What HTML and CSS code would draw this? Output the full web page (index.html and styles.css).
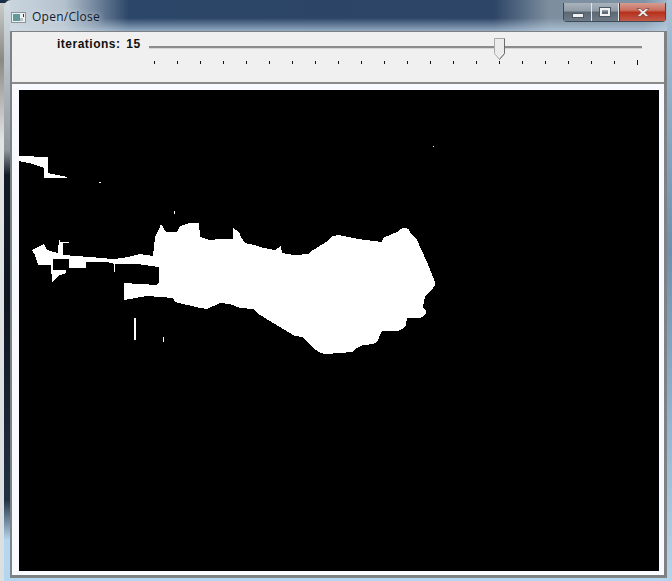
FILE: index.html

```html
<!DOCTYPE html>
<html lang="en">
<head>
    <meta charset="UTF-8">
    <title>Open/Close</title>
    <link rel="stylesheet" href="styles.css">
</head>
<body>
    <div class="window">
        <div class="titlebar">
            <svg class="app-icon" width="15" height="11" viewBox="0 0 15 11">
                <rect x="0.5" y="0.5" width="14" height="10" fill="#eef0f0" stroke="#8d9499"/>
                <rect x="2" y="2" width="7" height="7" fill="#5f9a98"/>
                <rect x="9" y="6" width="3" height="3" fill="#b9c0c2"/>
                <rect x="12" y="2" width="1" height="3" fill="#30363a"/>
            </svg>
            <span class="title">Open/Close</span>
            <div class="controls">
                <div class="btn btn-min"><span class="min-glyph"></span></div>
                <div class="btn btn-max"><span class="max-glyph"></span></div>
                <div class="btn btn-close">
                    <svg width="16" height="11" viewBox="0 0 16 11">
                        <path d="M2 1.5h3.2L8 4l2.8-2.5H14L10 5.500l4 4h-3.200L8 7l-2.800 2.500H2l4-4z" fill="#f2f0f0" stroke="#6b3a38" stroke-width="0.7"/>
                    </svg>
                </div>
            </div>
        </div>
        <div class="client">
            <div class="trackbar">
                <span class="trackbar-label">iterations: 15</span>
                <div class="slider">
                    <div class="track"></div>
                    <svg class="thumb" width="12" height="22" viewBox="0 0 12 22">
                        <path d="M0.500 0.500h10v15l-5 6-5-6z" fill="#ececec" stroke="#a9a9a9"/>
                        <path d="M10.500 0.500v15l-5 6" fill="none" stroke="#6d6d6d"/>
                    </svg>
                    <div class="ticks">
                        <i></i><i></i><i></i><i></i><i></i><i></i><i></i><i></i><i></i><i></i><i></i>
                        <i></i><i></i><i></i><i></i><i></i><i></i><i></i><i></i><i></i><i></i><i class="last"></i>
                    </div>
                </div>
            </div>
            <div class="frame">
                <svg class="result" width="640" height="481" viewBox="19 90 640 481">
                    <rect x="19" y="90" width="640" height="481" fill="#000"/>
                    <g fill="#fff">
                        <path d="M19 156 48 157V173L57 175 67 177V178H44V168L33 164 19 161Z"/>
                        <path d="M32 250 44 244 47 250 58 253 59 238 60 242H69V243H63V255L90 257 113 259 123 258 132 256 140 254 153 256 155 237 160 227 161 224 166 232H177L180 226 190 223H199L200 237 210 240 220 239H233V228L239 232 241 237 245 243 254 245 264 248 275 250 281 246 282 253 294 255 309 254 310 252 318 247 326 242Q330 238 333 236L339 235 358 239 382 242 383 238 397 232Q401 228 405 228T410 232L417 240 427 262 435 282Q436 286 433 288L425 296 423 307Q428 312 425 315T418 318L407 318 406 325Q402 331 396 331H382L377 342Q372 345 363 345 357 347 352 352L327 354Q320 354 316 350L310 345 303 337 295 336 273 323 257 313 253 309 240 308 230 304 220 303 207 309 200 308 175 302 173 298 147 296 124 300V283L157 285 159 282V267L137 264H115L107 262H86V268H69V259H53V270H66V273L60 275 52 282 51 265H38L35 255Z"/>
                        <rect x="114" y="263" width="1" height="9"/>
                        <rect x="134" y="318" width="2" height="22"/>
                        <rect x="163" y="337" width="1" height="5"/>
                        <rect x="174" y="211" width="1" height="3"/>
                        <rect x="99" y="182" width="2" height="1"/>
                        <rect x="433" y="146" width="1" height="1"/>
                    </g>
                </svg>
            </div>
        </div>
    </div>
</body>
</html>
```

FILE: styles.css

```css
html, body {
    margin: 0;
    height: 100%;
}
body {
    width: 672px;
    height: 581px;
    overflow: hidden;
    background: linear-gradient(to bottom, #1d2f48 0, #1d2f48 3px, #c9ccc8 3px, #8a8a84 60px, #e2e4e4 140px, #dcdfe0 100%);
}
.window {
    margin: 0 0 0 4px;
    padding: 3px 0 0 0;
    height: 581px;
    border-radius: 7px 0 0 0;
    background:
        linear-gradient(to bottom, #d3dde4 0, #9aa3aa 130px, #8f979e 150px, #121c28 175px, #0e1620 300px, #223244 500px, #b5d6f0 540px) left top / 6px 100% no-repeat,
        linear-gradient(to bottom, #a9c2d6 0, #6f8fae 250px, #8fb0cc 400px, #b8d4ea 100%) right top / 5px 100% no-repeat,
        linear-gradient(to right, rgba(213,223,230,0.95) 0, rgba(205,216,224,0.85) 60px, rgba(60,84,116,0) 125px) left top / 100% 31px no-repeat,
        linear-gradient(to bottom, rgba(190,212,232,0) 18px, rgba(190,212,232,0.7) 31px) left top / 100% 31px no-repeat,
        linear-gradient(to right, #2b4669 0, #2d4566 490px, #7d8f9f 545px, #7f93a6 640px, #a8bdd0 100%) left top / 100% 31px no-repeat,
        #b5d6f0;
    box-sizing: border-box;
}
.titlebar {
    display: flex;
    align-items: flex-start;
    height: 28px;
    padding-left: 7px;
}
.app-icon {
    margin-top: 9px;
}
.title {
    margin: 5px 0 0 6px;
    font: 12px/18px "Open Sans", sans-serif;
    letter-spacing: 0.25px;
    color: #0f1d33;
    text-shadow: 0 0 6px rgba(255,255,255,0.8);
}
.controls {
    display: flex;
    height: 18px;
    margin-left: auto;
    margin-right: 6px;
    border: 1px solid #3d4a58;
    border-top: 0;
    border-radius: 0 0 4px 4px;
}
.btn {
    display: flex;
    align-items: center;
    justify-content: center;
    box-sizing: border-box;
    height: 18px;
    border-right: 1px solid #dfe5ea;
}
.btn-min {
    width: 28px;
    background: linear-gradient(to bottom, #a9b3bd 0, #909ba6 45%, #5b6873 50%, #6f7c87 100%);
}
.btn-max {
    width: 27px;
    background: linear-gradient(to bottom, #a9b3bd 0, #909ba6 45%, #5b6873 50%, #6f7c87 100%);
}
.btn-close {
    width: 46px;
    border-right: 0;
    border-left: 1px solid #6e2f28;
    background: linear-gradient(to bottom, #d79a90 0, #c9705f 40%, #b8301c 52%, #c25a48 100%);
}
.min-glyph {
    display: block;
    width: 10px;
    height: 3px;
    margin-top: 6px;
    background: #eef0f2;
    border: 1px solid #4d5864;
}
.max-glyph {
    display: block;
    width: 6px;
    height: 4px;
    border: 2px solid #eef0f2;
    outline: 1px solid #4d5864;
}
.client {
    width: 657px;
    height: 547px;
    margin-left: 6px;
    box-sizing: border-box;
    border-style: solid;
    border-color: #7f8285;
    border-width: 1px 3px 3px 2px;
    background: #f0f0f0;
}
.trackbar {
    display: flex;
    height: 52px;
    box-sizing: border-box;
    border-bottom: 2px solid #8a8a8a;
}
.trackbar-label {
    width: 137px;
    padding: 4px 0 0 45px;
    box-sizing: border-box;
    font: bold 12px/16px "Liberation Sans", sans-serif;
    letter-spacing: 0.5px;
    word-spacing: 2px;
    white-space: nowrap;
    color: #111;
}
.slider {
    position: relative;
    width: 493px;
}
.track {
    height: 2px;
    margin-top: 14px;
    background: #8c8c8c;
    border-bottom: 1px solid #d6d6d6;
}
.thumb {
    position: absolute;
    left: 345px;
    top: 6px;
}
.ticks {
    display: flex;
    justify-content: space-between;
    align-items: flex-start;
    width: 484px;
    margin: 12px 0 0 5px;
}
.ticks i {
    display: block;
    width: 1px;
    height: 3px;
    background: #111;
}
.ticks i.last {
    height: 5px;
    margin-top: -1px;
}
.frame {
    padding: 6px 5px 4px 7px;
    background: #f8faff;
}
.result {
    display: block;
    shape-rendering: crispEdges;
}
```
